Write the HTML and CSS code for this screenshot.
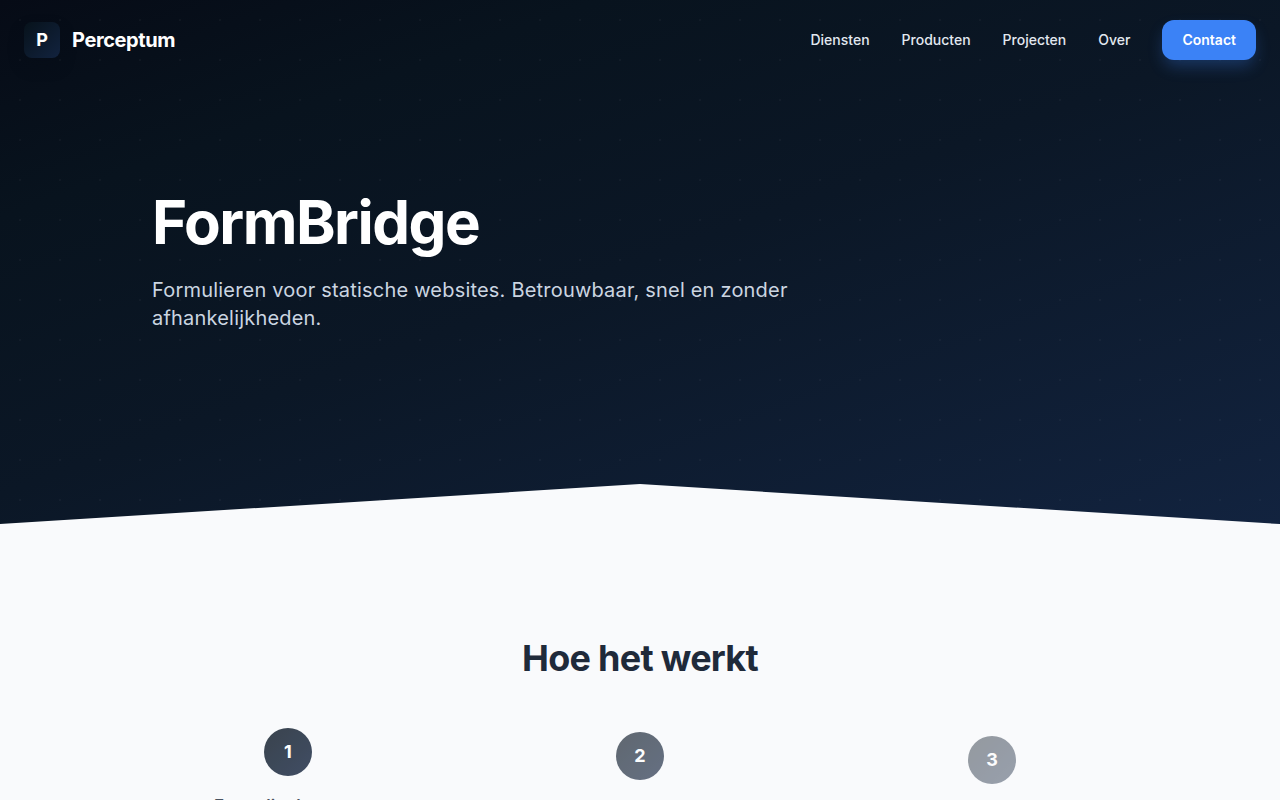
FILE: index.html
```html
<!DOCTYPE html>
<html lang="nl">
<head>
    <meta charset="UTF-8">
    <meta name="viewport" content="width=device-width, initial-scale=1.0">
    <title>FormBridge - Perceptum</title>
    <link rel="stylesheet" href="styles.css">
</head>
<body>
    <header class="hero">
        <nav class="navbar">
            <a href="#" class="brand">
                <span class="brand-icon">P</span>
                <span class="brand-name">Perceptum</span>
            </a>
            <div class="nav-links">
                <a href="#diensten">Diensten</a>
                <a href="#producten">Producten</a>
                <a href="#projecten">Projecten</a>
                <a href="#over">Over</a>
                <a href="#contact" class="nav-cta">Contact</a>
            </div>
        </nav>
        <div class="hero-content">
            <h1>FormBridge</h1>
            <p>Formulieren voor statische websites. Betrouwbaar, snel en zonder afhankelijkheden.</p>
        </div>
    </header>

    <main class="steps-section">
        <h2>Hoe het werkt</h2>
        <div class="steps">
            <div class="step step-first">
                <div class="step-number">1</div>
                <h3>Formulier bouwen</h3>
            </div>
            <div class="step step-second">
                <div class="step-number">2</div>
            </div>
            <div class="step step-third">
                <div class="step-number">3</div>
            </div>
        </div>
    </main>
</body>
</html>
```
FILE: styles.css
```css
* {
    box-sizing: border-box;
    margin: 0;
    padding: 0;
}
body {
    font-family: Inter, "Liberation Sans", sans-serif;
    background-color: #f9fafc;
    color: #1f2a3a;
    line-height: 1.6;
}
a {
    text-decoration: none;
}

/* Hero */
.hero {
    background:
        radial-gradient(circle at 20px 20px, rgba(255, 255, 255, 0.03) 1px, transparent 1px) 0 0 / 40px 40px,
        linear-gradient(160deg, #060b16 0%, #08131e 22%, #0b1726 50%, #12233f 100%);
    clip-path: polygon(0 0, 100% 0, 100% 100%, 50% calc(100% - 40px), 0 100%);
    padding-bottom: 192px;
}
.navbar {
    display: flex;
    justify-content: space-between;
    align-items: center;
    height: 80px;
    padding: 0 24px;
}
.brand {
    display: flex;
    align-items: center;
    gap: 12px;
    color: #fff;
    font-weight: 700;
}
.brand-icon {
    display: flex;
    align-items: center;
    justify-content: center;
    width: 36px;
    height: 36px;
    border-radius: 8px;
    background: linear-gradient(135deg, #07121b, #12233f);
    box-shadow: 0 8px 16px rgba(6, 12, 22, 0.3);
    font-size: 18px;
}
.brand-name {
    font-size: 20px;
    letter-spacing: -0.02em;
}
.nav-links {
    display: flex;
    align-items: center;
    gap: 32px;
}
.nav-links a {
    color: #e2e8f0;
    font-size: 14px;
    font-weight: 500;
}
.nav-links .nav-cta {
    padding: 0 20px;
    line-height: 40px;
    border-radius: 12px;
    background-color: #3b82f6;
    color: #fff;
    font-weight: 600;
    box-shadow: 0 8px 16px -2px rgba(59, 130, 246, 0.3);
}
.hero-content {
    max-width: 1024px;
    margin: 0 auto;
    padding: 108px 24px 0;
}
.hero-content h1 {
    color: #fff;
    font-size: 60px;
    font-weight: 700;
    line-height: 68px;
    letter-spacing: -0.025em;
    margin-bottom: 20px;
}
.hero-content p {
    max-width: 640px;
    color: #cbd5e1;
    font-size: 20px;
    line-height: 28px;
    letter-spacing: 0.01em;
}

/* Steps */
.steps-section {
    max-width: 1024px;
    margin: 0 auto;
    padding: 104px 0 80px;
}
.steps-section h2 {
    font-size: 36px;
    font-weight: 700;
    line-height: 60px;
    letter-spacing: -0.02em;
    text-align: center;
    margin-bottom: 40px;
}
.steps {
    display: grid;
    grid-template-columns: repeat(3, 1fr);
    gap: 32px;
}
.step {
    display: flex;
    flex-direction: column;
    align-items: center;
    gap: 16px;
}
.step-first {
    opacity: 0.8;
}
.step-second {
    opacity: 0.64;
    padding-top: 4px;
}
.step-third {
    opacity: 0.42;
    padding-top: 8px;
}
.step-number {
    display: flex;
    align-items: center;
    justify-content: center;
    width: 48px;
    height: 48px;
    border-radius: 50%;
    background: linear-gradient(135deg, #0a1622, #13233f);
    color: #fff;
    font-size: 18px;
    font-weight: 700;
}
.step h3 {
    font-size: 17px;
    font-weight: 600;
    line-height: 28px;
}
```
